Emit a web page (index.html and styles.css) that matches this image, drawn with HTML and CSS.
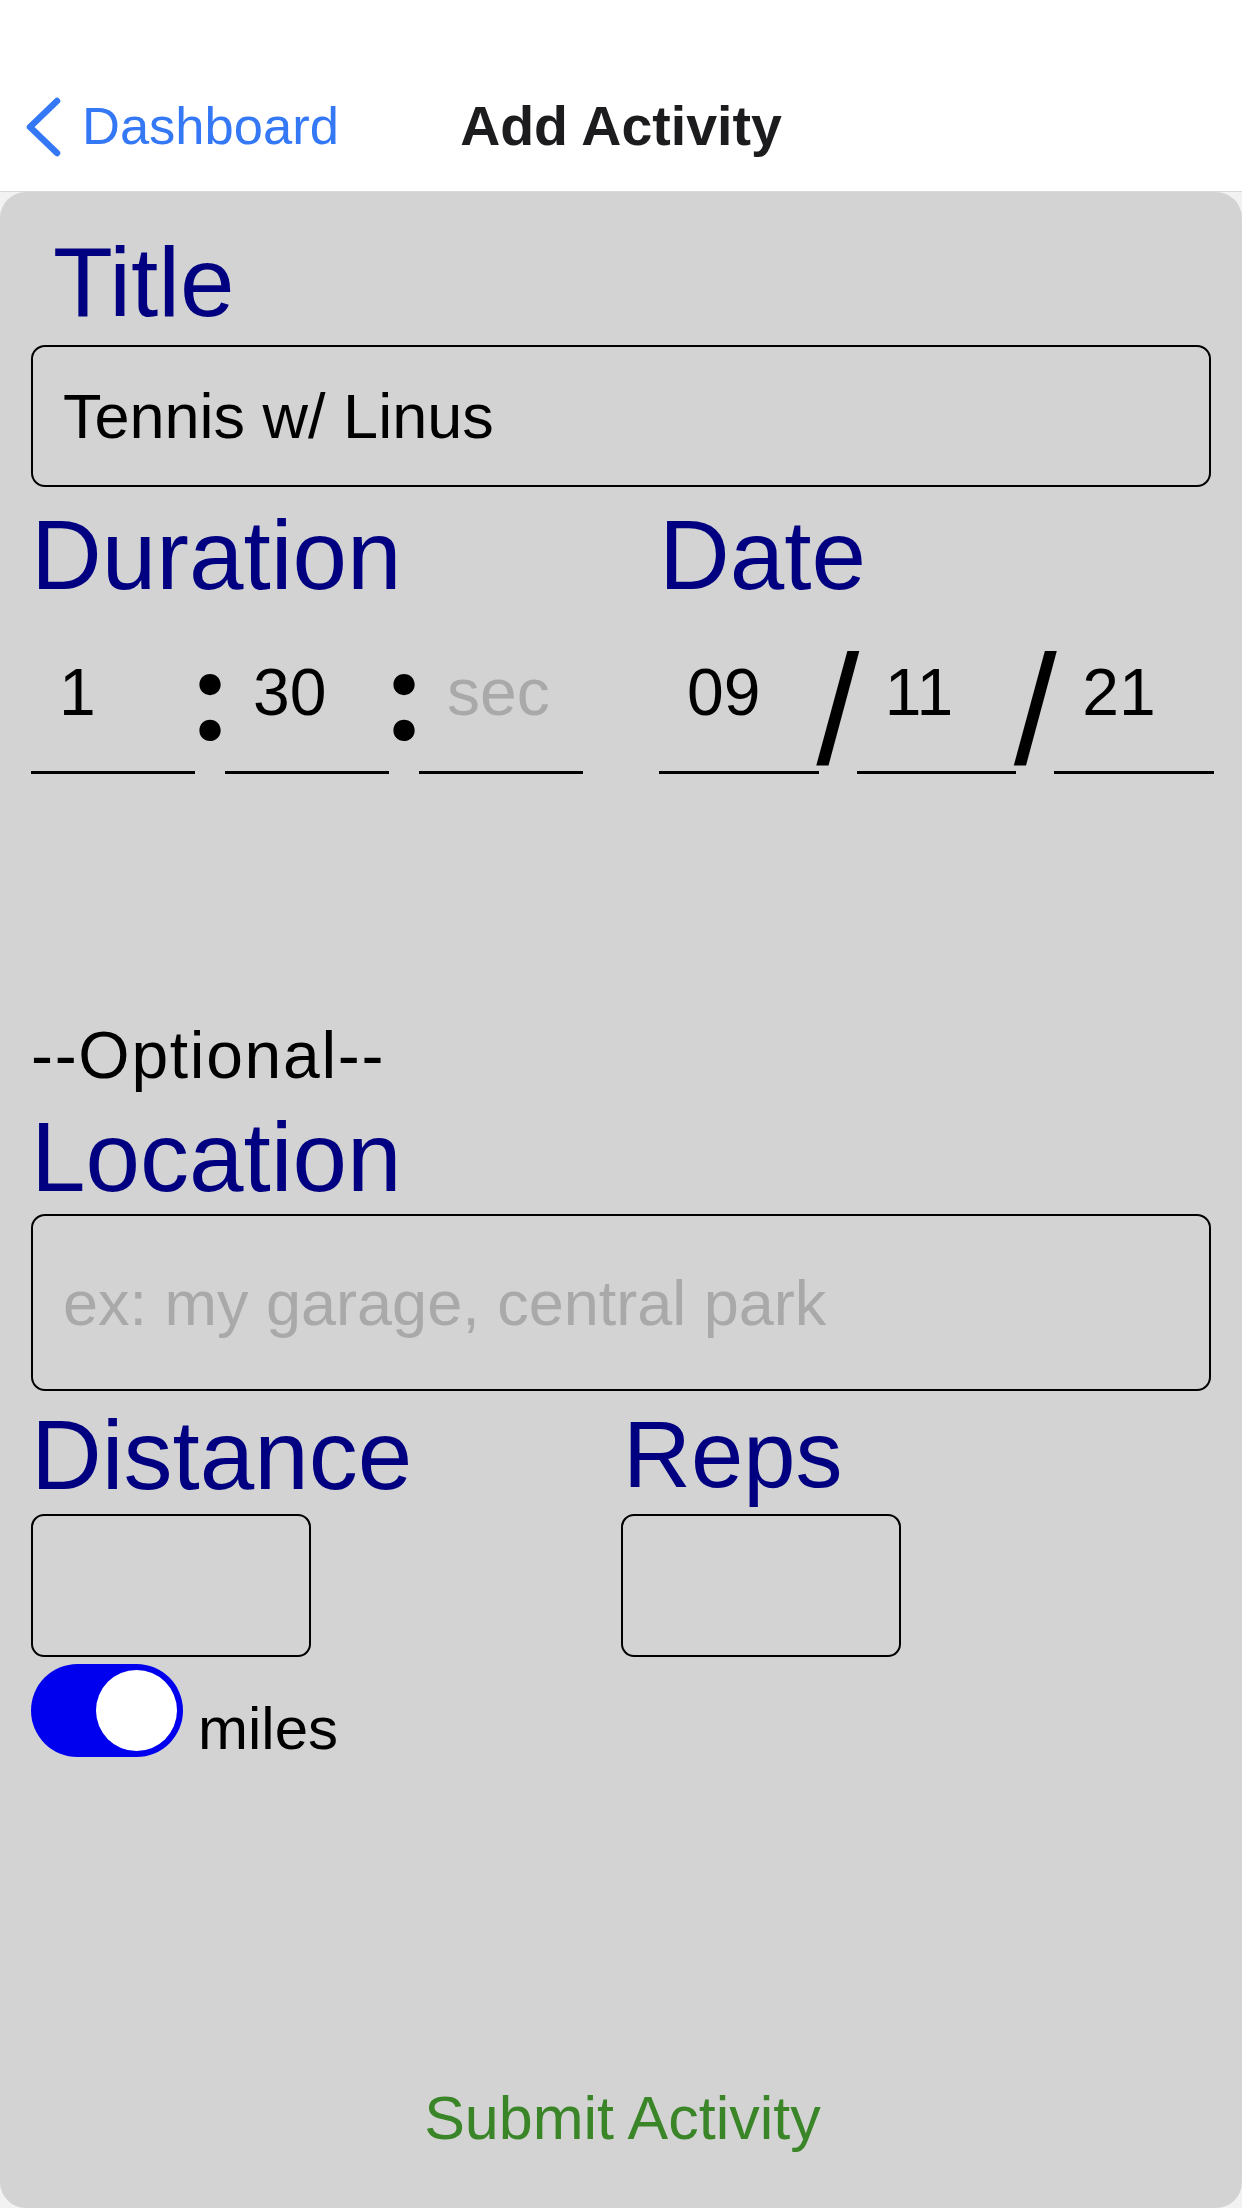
FILE: index.html
```html
<!DOCTYPE html>
<html lang="en">
<head>
<meta charset="utf-8">
<title>Add Activity</title>
<link rel="stylesheet" href="styles.css">
</head>
<body>
  <header class="navbar">
    <a class="back" href="#">
      <svg class="chevron" width="36" height="60" viewBox="0 0 36 60" aria-hidden="true">
        <path d="M32 4 L5 30 L32 56" fill="none" stroke="#3478f6" stroke-width="6.5" stroke-linecap="round" stroke-linejoin="round"/>
      </svg>
      <span class="back-text">Dashboard</span>
    </a>
    <h1 class="nav-title">Add Activity</h1>
    <span class="nav-spacer"></span>
  </header>

  <main class="card">
    <div class="label label-title">Title</div>
    <input class="box-input title-input" type="text" value="Tennis w/ Linus">

    <div class="time-date">
      <section class="col col-duration">
        <div class="label">Duration</div>
        <div class="fields">
          <input class="field field-dur" type="text" value="1">
          <span class="sep sep-colon">:</span>
          <input class="field field-dur" type="text" value="30">
          <span class="sep sep-colon">:</span>
          <input class="field field-dur" type="text" placeholder="sec">
        </div>
      </section>
      <section class="col col-date">
        <div class="label">Date</div>
        <div class="fields">
          <input class="field field-date" type="text" value="09">
          <span class="sep sep-slash">/</span>
          <input class="field field-date" type="text" value="11">
          <span class="sep sep-slash">/</span>
          <input class="field field-date" type="text" value="21">
        </div>
      </section>
    </div>

    <div class="optional">--Optional--</div>

    <div class="label">Location</div>
    <input class="box-input location-input" type="text" placeholder="ex: my garage, central park">

    <div class="extras">
      <section class="extra">
        <div class="label">Distance</div>
        <input class="small-input" type="text">
        <div class="unit-row">
          <span class="toggle"><span class="knob"></span></span>
          <span class="unit">miles</span>
        </div>
      </section>
      <section class="extra">
        <div class="label label-reps">Reps</div>
        <input class="small-input" type="text">
      </section>
    </div>

    <div class="submit">Submit Activity</div>
  </main>
</body>
</html>
```

FILE: styles.css
```css
* { box-sizing: border-box; }

html, body {
  margin: 0;
  padding: 0;
}

body {
  background: #f2f2f2;
  font-family: "Liberation Sans", Arial, sans-serif;
  min-height: 2208px;
  display: flex;
  flex-direction: column;
}

/* ---------- nav bar ---------- */
.navbar {
  background: #ffffff;
  border-bottom: 1px solid #d9d9d9;
  height: 192px;
  padding-top: 62px;
  display: grid;
  grid-template-columns: 1fr auto 1fr;
  align-items: center;
}

.back {
  display: flex;
  align-items: center;
  text-decoration: none;
  padding-left: 25px;
  gap: 21px;
}

.chevron { display: block; }

.back-text {
  color: #3478f6;
  font-size: 52.5px;
  line-height: 1;
}

.nav-title {
  margin: 0;
  font-size: 55.5px;
  font-weight: 700;
  color: #1c1c1e;
  line-height: 1;
}

/* ---------- card ---------- */
.card {
  flex: 1;
  background: #d3d3d3;
  border-radius: 26px;
  padding: 42px 28px 0 31px;
  display: flex;
  flex-direction: column;
}

.label {
  color: #000080;
  font-size: 98px;
  line-height: 96px;
  margin-left: 0;
}

.label-title { margin-left: 22px; }
.label-reps { font-size: 94px; margin-left: 2px; }

.box-input {
  display: block;
  width: calc(100% - 3px);
  border: 2px solid #000;
  border-radius: 14px;
  background: transparent;
  font-family: "Liberation Sans", Arial, sans-serif;
  font-size: 63px;
  color: #000;
  padding: 0 30px;
  outline: none;
}

.box-input::placeholder { color: #a9a9a9; }

.title-input {
  height: 142px;
  margin-top: 15px;
}

/* ---------- duration / date ---------- */
.time-date {
  display: flex;
  gap: 76px;
  margin-top: 20px;
}

.col-duration { width: 552px; }
.col-date { width: 555px; }

.fields {
  display: flex;
  margin-top: 59px;
  height: 112px;
}

.field {
  flex: 1;
  min-width: 0;
  height: 112px;
  border: none;
  border-bottom: 3px solid #000;
  background: transparent;
  font-family: "Liberation Sans", Arial, sans-serif;
  font-size: 66px;
  color: #000;
  padding: 0 0 50px 28px;
  outline: none;
}

.field::placeholder { color: #a9a9a9; }

.sep {
  flex: none;
  color: #000;
  align-self: flex-start;
  display: flex;
  justify-content: center;
  overflow: visible;
}

.sep-colon {
  width: 30px;
  font-family: Inter, "Liberation Sans", sans-serif;
  font-size: 126px;
  font-weight: 700;
  line-height: 64px;
}

.sep-slash {
  width: 38px;
  font-size: 155px;
  font-weight: 400;
  line-height: 98px;
}

/* ---------- optional ---------- */
.optional {
  margin-top: 249px;
  font-size: 66px;
  line-height: 64px;
  letter-spacing: 1.7px;
  color: #000;
}

.optional + .label { margin-top: 22px; }

.location-input {
  height: 177px;
  margin-top: 9px;
}

/* ---------- distance / reps ---------- */
.extras {
  display: grid;
  grid-template-columns: 590px 1fr;
  margin-top: 16px;
}

.small-input {
  display: block;
  width: 280px;
  height: 143px;
  margin-top: 11px;
  border: 2px solid #000;
  border-radius: 13px;
  background: transparent;
  outline: none;
}

.unit-row {
  display: flex;
  align-items: flex-end;
  gap: 15px;
  margin-top: 7px;
}

.toggle {
  display: flex;
  justify-content: flex-end;
  align-items: center;
  width: 152px;
  height: 93px;
  border-radius: 47px;
  background: #0000ee;
  padding: 0 6px;
}

.knob {
  width: 81px;
  height: 81px;
  border-radius: 50%;
  background: #ffffff;
}

.unit {
  font-size: 60px;
  line-height: 62px;
  color: #000;
  margin-bottom: -3px;
}

/* ---------- submit ---------- */
.submit {
  margin-top: auto;
  padding-bottom: 59px;
  text-align: center;
  color: #3a8527;
  font-size: 61px;
  line-height: 61px;
}
```
